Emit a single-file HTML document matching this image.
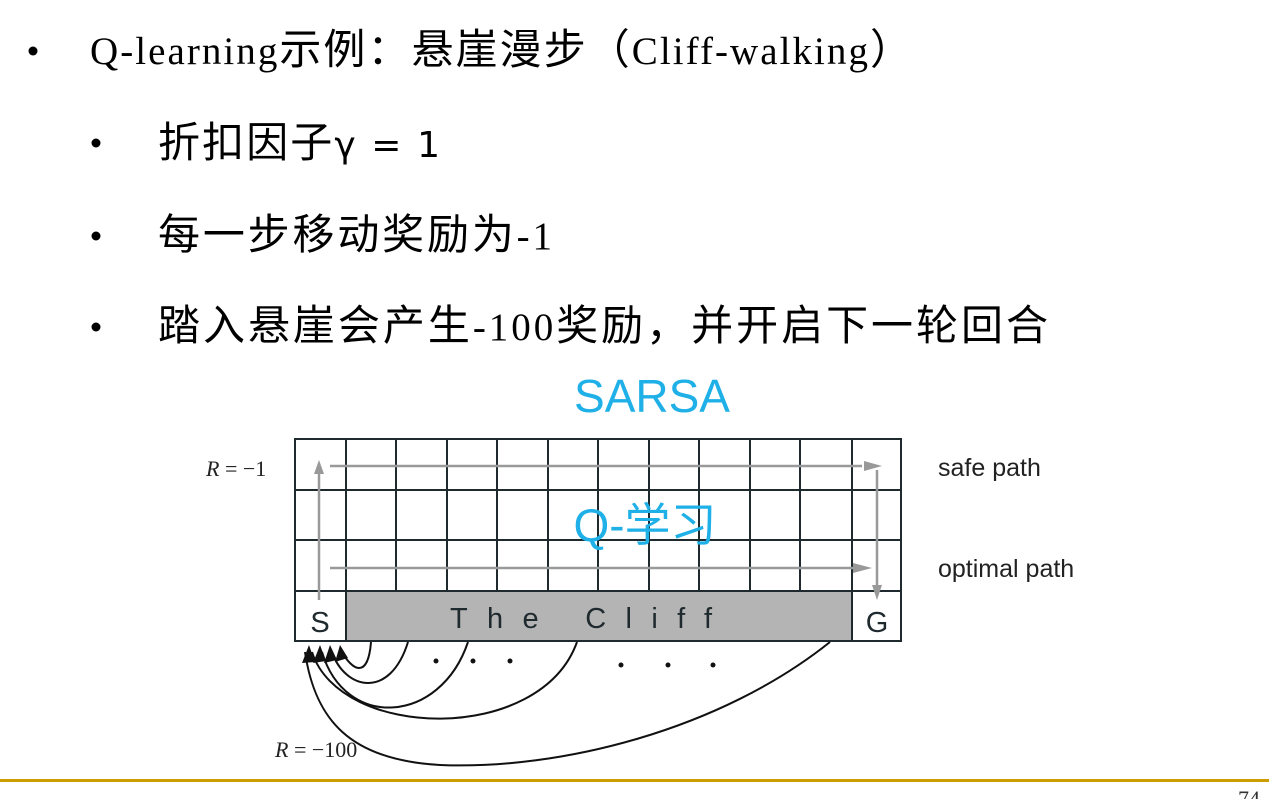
<!DOCTYPE html>
<html><head><meta charset="utf-8"><style>
html,body{margin:0;padding:0;background:#fff;width:1269px;height:799px;overflow:hidden}
svg{display:block}
.t{font-family:"Liberation Serif","Noto Sans CJK SC",serif;font-size:39px;fill:#000}
.c{font-family:"Noto Sans CJK SC",sans-serif;font-size:42px}
.a{font-family:"Liberation Sans","Noto Sans CJK SC",sans-serif}
</style></head><body>
<svg width="1269" height="799" viewBox="0 0 1269 799" xmlns="http://www.w3.org/2000/svg">
<circle cx="33" cy="51" r="4.5" fill="#000"/>
<text class="t" x="90" y="64" textLength="822" lengthAdjust="spacing">Q-learning<tspan class="c">示例：悬崖漫步（</tspan>Cliff-walking<tspan class="c">）</tspan></text>
<circle cx="96" cy="143" r="4.5" fill="#000"/>
<text class="t" x="158" y="157" textLength="282" lengthAdjust="spacing"><tspan class="c">折扣因子</tspan><tspan font-family="DejaVu Sans,sans-serif" font-size="36">γ = 1</tspan></text>
<circle cx="96" cy="236" r="4.5" fill="#000"/>
<text class="t" x="158" y="249" textLength="394" lengthAdjust="spacing"><tspan class="c">每一步移动奖励为</tspan>-1</text>
<circle cx="96" cy="327" r="4.5" fill="#000"/>
<text class="t" x="158" y="340" textLength="890" lengthAdjust="spacing"><tspan class="c">踏入悬崖会产生</tspan>-100<tspan class="c">奖励，并开启下一轮回合</tspan></text>

<text class="a" x="652" y="412" font-size="46" fill="#1fb0e8" text-anchor="middle">SARSA</text>

<rect x="346" y="591" width="506" height="50" fill="#b4b4b4"/>
<g stroke="#1f2a2e" stroke-width="2" fill="none">
<rect x="295" y="439" width="606" height="202"/>
<line x1="295" y1="490" x2="901" y2="490"/>
<line x1="295" y1="540" x2="901" y2="540"/>
<line x1="295" y1="591" x2="901" y2="591"/>
<line x1="346" y1="439" x2="346" y2="641"/>
<line x1="852" y1="439" x2="852" y2="641"/>
<line x1="396" y1="439" x2="396" y2="591"/>
<line x1="447" y1="439" x2="447" y2="591"/>
<line x1="497" y1="439" x2="497" y2="591"/>
<line x1="548" y1="439" x2="548" y2="591"/>
<line x1="598" y1="439" x2="598" y2="591"/>
<line x1="649" y1="439" x2="649" y2="591"/>
<line x1="699" y1="439" x2="699" y2="591"/>
<line x1="750" y1="439" x2="750" y2="591"/>
<line x1="800" y1="439" x2="800" y2="591"/>
</g>
<g stroke="#999" stroke-width="2.5" fill="none">
<line x1="319" y1="600" x2="319" y2="472"/>
<line x1="330" y1="466" x2="862" y2="466"/>
<line x1="877" y1="470" x2="877" y2="590"/>
<line x1="330" y1="568" x2="862" y2="568"/>
</g>
<g fill="#999">
<polygon points="319,460 314,474 324,474"/>
<polygon points="882,466 864,461 864,471"/>
<polygon points="877,600 872,585 882,585"/>
<polygon points="872,568 853,563 853,573"/>
</g>
<text class="a" x="320" y="632" font-size="29" fill="#1f2a2e" text-anchor="middle">S</text>
<text class="a" x="877" y="632" font-size="29" fill="#1f2a2e" text-anchor="middle">G</text>
<text class="a" x="450" y="628" font-size="29" fill="#1f2a2e" textLength="262" lengthAdjust="spacing">The  Cliff</text>
<text class="a" x="645" y="541" font-size="46" fill="#1fb0e8" text-anchor="middle">Q-学习</text>
<text class="a" x="938" y="476" font-size="25" fill="#222">safe path</text>
<text class="a" x="938" y="577" font-size="25" fill="#222">optimal path</text>
<text x="206" y="476" font-family="Liberation Serif,serif" font-size="22" fill="#222"><tspan font-style="italic">R</tspan> = −1</text>
<text x="275" y="757" font-family="Liberation Serif,serif" font-size="22" fill="#222"><tspan font-style="italic">R</tspan> = −100</text>
<g stroke="#111" stroke-width="2" fill="none">
<path d="M371,642 C368,680 352,670 342,652"/>
<path d="M408,642 C390,700 345,690 332,652"/>
<path d="M468,642 C440,725 345,730 322,652"/>
<path d="M577,642 C540,745 340,740 312,652"/>
<path d="M830,642 C720,730 560,770 440,765 C350,760 315,720 305,652"/>
</g>
<g fill="#111">
<polygon points="340,645 335,662 348,658"/>
<polygon points="330,645 324,663 337,660"/>
<polygon points="320,645 313,663 326,661"/>
<polygon points="309,645 302,663 315,662"/>
</g>
<g fill="#111">
<circle cx="436" cy="661" r="2.5"/><circle cx="473" cy="661" r="2.5"/><circle cx="510" cy="661" r="2.5"/>
<circle cx="621" cy="665" r="2.5"/><circle cx="668" cy="665" r="2.5"/><circle cx="713" cy="665" r="2.5"/>
</g>

<rect x="0" y="779" width="1269" height="3" fill="#cc9c00"/>
<text x="1238" y="806" font-family="Liberation Serif,serif" font-size="22" fill="#333">74</text>
</svg>
</body></html>
